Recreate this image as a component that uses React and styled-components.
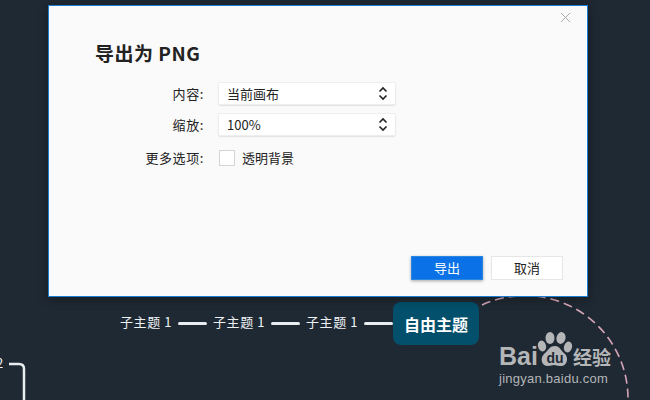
import React from "react";
import styled, { createGlobalStyle } from "styled-components";

const Global = createGlobalStyle`
  html, body { margin: 0; padding: 0; background: #1f2933; }
  body { font-family: "Noto Sans CJK SC", "Noto Sans", sans-serif; }
`;

const Canvas = styled.div`
  position: relative;
  width: 650px;
  height: 400px;
  overflow: hidden;
  background: #1f2933;
`;

const Dialog = styled.section`
  position: absolute;
  left: 48px;
  top: 5px;
  width: 540px;
  height: 292px;
  box-sizing: border-box;
  border: 1px solid #1a7fd4;
  background: #fafafa;
  box-shadow: 0 2px 10px rgba(0, 0, 0, 0.35);
  padding: 34px 24px 16px 46px;
  display: flex;
  flex-direction: column;
`;

const Close = styled.svg`
  position: absolute;
  right: 16px;
  top: 6px;
  width: 11px;
  height: 11px;
`;

const Title = styled.h1`
  margin: 0 0 17px;
  font-size: 19px;
  line-height: 26px;
  font-weight: 700;
  letter-spacing: 0.5px;
  color: #222;
`;

const Form = styled.div`
  display: grid;
  grid-template-columns: 109px 176px;
  column-gap: 15px;
  grid-auto-rows: 21px;
  row-gap: 10px;
  align-items: center;
  font-size: 13px;
  color: #222;
`;

const Label = styled.div`
  text-align: right;
  line-height: 21px;
  letter-spacing: 0.6px;
  color: #222;
  white-space: nowrap;
  transform: translateY(${(p) => p.$shift || 0}px);
`;

const Select = styled.div`
  height: 21px;
  background: #fff;
  box-shadow: 0 0 0 1px #eeeeee, 0 1px 2px rgba(0, 0, 0, 0.25);
  display: flex;
  align-items: center;
  justify-content: space-between;
  padding: 0 7px 0 8px;
  box-sizing: border-box;
  line-height: 21px;
  color: #222;
`;

const CheckRow = styled.div`
  display: flex;
  align-items: center;
  gap: 7px;
  height: 21px;
  transform: translateY(2px);
`;

const Box = styled.span`
  width: 16px;
  height: 16px;
  box-sizing: border-box;
  background: #fff;
  border: 1px solid #d4d4d4;
`;

const Actions = styled.div`
  margin-top: auto;
  display: flex;
  justify-content: flex-end;
  gap: 8px;
`;

const Button = styled.button`
  width: 72px;
  height: 24px;
  padding: 0;
  border: 1px solid ${(p) => (p.$primary ? "#2a86e0" : "#e6e6e6")};
  background: ${(p) => (p.$primary ? "#0a72e6" : "#fff")};
  color: ${(p) => (p.$primary ? "#fff" : "#222")};
  box-shadow: ${(p) => (p.$primary ? "0 1px 3px rgba(0,0,0,.35)" : "none")};
  font: 13px/22px "Noto Sans CJK SC", sans-serif;
`;

const Strand = styled.div`
  position: absolute;
  left: 120px;
  top: 302px;
  height: 43px;
  display: flex;
  align-items: center;
`;

const Sub = styled.span`
  font-size: 13px;
  line-height: 18px;
  color: #eef2f5;
  white-space: nowrap;
  width: 54px;
  letter-spacing: 0.6px;
  margin-bottom: 3px;
`;

const Link = styled.span`
  width: 29px;
  height: 3px;
  margin: 0 6px 1px 4px;
  background: #e8edf2;
  border-radius: 2px;
`;

const Topic = styled.div`
  width: 86px;
  height: 43px;
  margin-left: -6px;
  border-radius: 8px;
  background: #02506b;
  color: #fff;
  font-family: "Noto Sans CJK SC", sans-serif;
  font-size: 16px;
  font-weight: 700;
  display: flex;
  align-items: center;
  justify-content: center;
`;

const Overlay = styled.svg`
  position: absolute;
  left: 0;
  top: 0;
`;

const EdgeTwo = styled.span`
  position: absolute;
  left: -4px;
  top: 356px;
  font-size: 13px;
  line-height: 14px;
  color: #eef2f5;
`;

const Mark = styled.div`
  position: absolute;
  left: 499px;
  top: 332px;
  width: 140px;
  color: #b4b6b8;
`;

const MarkTop = styled.div`
  display: flex;
  align-items: flex-end;
  height: 37px;
`;

const Bai = styled.span`
  font-family: "Liberation Sans", sans-serif;
  font-size: 25px;
  font-weight: 700;
  line-height: 26px;
  width: 38px;
`;

const Jing = styled.span`
  font-size: 19px;
  font-weight: 700;
  line-height: 24px;
`;

const Url = styled.div`
  font-family: "Liberation Sans", sans-serif;
  font-size: 13px;
  line-height: 15px;
  margin-top: 2px;
  letter-spacing: 0.25px;
`;

const Updown = () => (
  <svg width="10" height="15" viewBox="0 0 10 15" fill="none" stroke="#222" strokeWidth="1.6">
    <path d="M1.5 5.5 5 2l3.5 3.5M1.5 9.5 5 13l3.5-3.5" />
  </svg>
);

const Paw = () => (
  <svg width="36" height="37" viewBox="0 0 36 37" fill="#b4b6b8">
    <ellipse cx="5" cy="14" rx="4" ry="5.5" transform="rotate(-15 5 14)" />
    <ellipse cx="13" cy="6" rx="4.5" ry="6" />
    <ellipse cx="24" cy="6" rx="4.5" ry="6" transform="rotate(12 24 6)" />
    <ellipse cx="31" cy="15" rx="4" ry="5.5" transform="rotate(15 31 15)" />
    <path d="M18 14c5 0 6 5 10 8 4 4 2 13-5 12-3 0-4-1-6-1s-3 1-6 1c-7 0-8-8-4-12 4-3 5-8 11-8z" />
    <text x="18" y="31" textAnchor="middle" fontFamily="Liberation Sans, sans-serif" fontSize="14" fontWeight="700" fill="#1f2933">du</text>
  </svg>
);

export default function App() {
  return (
    <Canvas>
      <Global />
      <Overlay width="650" height="400" viewBox="0 0 650 400" fill="none">
        <path d="M482 305A103 103 0 0 1 628 398" stroke="#d6a6b8" strokeWidth="1.6" strokeDasharray="9 5" />
        <path d="M9 364h10q5 0 5 5v31" stroke="#e8edf2" strokeWidth="2.5" />
      </Overlay>
      <EdgeTwo>2</EdgeTwo>
      <Strand>
        <Sub>子主题 1</Sub>
        <Link />
        <Sub>子主题 1</Sub>
        <Link />
        <Sub>子主题 1</Sub>
        <Link />
        <Topic>自由主题</Topic>
      </Strand>
      <Mark>
        <MarkTop>
          <Bai>Bai</Bai>
          <Paw />
          <Jing>经验</Jing>
        </MarkTop>
        <Url>jingyan.baidu.com</Url>
      </Mark>
      <Dialog>
        <Close viewBox="0 0 11 11" fill="none" stroke="#a8a8a8" strokeWidth="1">
          <path d="M1 1l9 9M10 1l-9 9" />
        </Close>
        <Title>导出为 PNG</Title>
        <Form>
          <Label>内容:</Label>
          <Select>
            当前画布
            <Updown />
          </Select>
          <Label>缩放:</Label>
          <Select>
            100%
            <Updown />
          </Select>
          <Label $shift={2}>更多选项:</Label>
          <CheckRow>
            <Box />
            透明背景
          </CheckRow>
        </Form>
        <Actions>
          <Button $primary>导出</Button>
          <Button>取消</Button>
        </Actions>
      </Dialog>
    </Canvas>
  );
}
